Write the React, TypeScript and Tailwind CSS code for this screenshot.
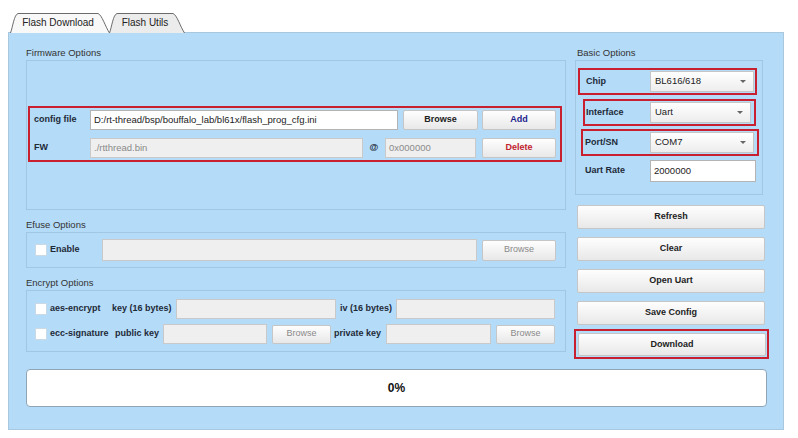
import type { ReactNode } from 'react'

const font = "font-['Liberation_Sans',Arial,sans-serif]"

function Tab({ label, active, width }: { label: string; active?: boolean; width: number }) {
  return (
    <div className="relative h-[21px] flex items-center justify-center" style={{ width }}>
      <svg className="absolute inset-0" width={width} height={21} viewBox={`0 0 ${width} 21`}>
        <path
          d={`M0.5 21 C3 14 4 3 8 1.5 L${width - 12} 1.5 C${width - 8} 3 ${width - 5} 14 ${width - 0.5} 21`}
          fill={active ? '#f8f8f8' : '#ececec'}
          stroke="#6b6b6b"
          strokeWidth="1"
        />
      </svg>
      <span className="relative text-[10px] text-[#222] pr-[4px]">{label}</span>
    </div>
  )
}

function Btn({ children, className = '', text = 'text-[#222]' }: { children: ReactNode; className?: string; text?: string }) {
  return (
    <div
      className={`flex items-center justify-center border border-[#c6c6c6] rounded-[2px] bg-gradient-to-b from-[#fefefe] to-[#e8e8e8] text-[9px] font-bold ${text} ${className}`}
    >
      {children}
    </div>
  )
}

function Field({ value = '', disabled, className = '' }: { value?: string; disabled?: boolean; className?: string }) {
  return (
    <div
      className={`flex items-center px-[3px] border text-[9.5px] ${
        disabled ? 'bg-[#efefef] border-[#c9c9c9] text-[#8a8a8a]' : 'bg-white border-[#b4b4b4] text-[#222]'
      } ${className}`}
    >
      {value}
    </div>
  )
}

function Check() {
  return <div className="w-[12px] h-[12px] bg-white border border-[#c9d9e6] shrink-0" />
}

function Select({ value, className = '' }: { value: string; className?: string }) {
  return (
    <div
      className={`flex items-center justify-between pl-[4px] pr-[7px] border border-[#c6c6c6] bg-gradient-to-b from-[#ffffff] to-[#ededed] text-[9.5px] text-[#222] ${className}`}
    >
      <span>{value}</span>
      <span className="w-0 h-0 border-l-[3px] border-r-[3px] border-t-[3px] border-l-transparent border-r-transparent border-t-[#666]" />
    </div>
  )
}

function Section({ title, h, className = '' }: { title: string; h: number; className?: string }) {
  return (
    <div className={`flex items-end pb-[1px] text-[9.5px] text-[#333] leading-[12px] ${className}`} style={{ height: h }}>
      {title}
    </div>
  )
}

export default function App() {
  return (
    <div className={`w-[798px] h-[438px] bg-white pt-[12px] pl-[8px] ${font}`}>
      {/* tab strip */}
      <div className="flex h-[21px] pl-[2px] relative z-10">
        <Tab label="Flash Download" active width={100} />
        <div className="-ml-[1px]">
          <Tab label="Flash Utils" width={76} />
        </div>
      </div>

      {/* main panel */}
      <div className="w-[776px] h-[398px] -mt-[1px] bg-[#b4dbf8] border border-[#a9c8de] pl-[17px] pr-[14px]">
        <div className="flex gap-[9px]">
          {/* left column */}
          <div className="w-[541px]">
            <Section title="Firmware Options" h={27} />
            <div className="h-[150px] border border-[#a2c7e3] pt-[45px] pl-[1px]">
              <div className="w-[534px] h-[56px] border-2 border-[#c8202f] pt-[2px] pl-[4px] flex flex-col gap-[8px]">
                <div className="flex items-center h-[20px]">
                  <div className="w-[56px] text-[9px] font-bold text-[#1e2a38]">config file</div>
                  <Field value="D:/rt-thread/bsp/bouffalo_lab/bl61x/flash_prog_cfg.ini" className="w-[308px] h-[20px]" />
                  <Btn className="w-[75px] h-[20px] ml-[5px]">Browse</Btn>
                  <Btn className="w-[74px] h-[20px] ml-[4px]" text="text-[#1c1f8e]">Add</Btn>
                </div>
                <div className="flex items-center h-[20px]">
                  <div className="w-[56px] text-[9px] font-bold text-[#1e2a38]">FW</div>
                  <Field value="./rtthread.bin" disabled className="w-[273px] h-[20px]" />
                  <div className="w-[22px] text-center text-[9px] font-bold text-[#1e2a38]">@</div>
                  <Field value="0x000000" disabled className="w-[91px] h-[20px]" />
                  <Btn className="w-[74px] h-[20px] ml-[6px]" text="text-[#c2222e]">Delete</Btn>
                </div>
              </div>
            </div>

            <Section title="Efuse Options" h={22} />
            <div className="h-[36px] border border-[#a2c7e3] flex items-center pl-[8px]">
              <Check />
              <div className="w-[55px] pl-[3px] text-[9px] font-bold text-[#1e2a38]">Enable</div>
              <Field disabled className="w-[375px] h-[22px]" />
              <Btn className="w-[74px] h-[21px] ml-[5px]" text="text-[#8a8a8a] !font-normal">Browse</Btn>
            </div>

            <Section title="Encrypt Options" h={22} />
            <div className="h-[62px] border border-[#a2c7e3] pl-[8px] pt-[8px] flex flex-col gap-[5px]">
              <div className="flex items-center h-[20px]">
                <Check />
                <div className="w-[65px] pl-[3px] text-[9px] font-bold text-[#1e2a38]">aes-encrypt</div>
                <div className="w-[64px] text-[9px] font-bold text-[#1e2a38]">key (16 bytes)</div>
                <Field disabled className="w-[160px] h-[20px]" />
                <div className="w-[60px] pl-[4px] text-[9px] font-bold text-[#1e2a38]">iv (16 bytes)</div>
                <Field disabled className="w-[159px] h-[20px]" />
              </div>
              <div className="flex items-center h-[20px]">
                <Check />
                <div className="w-[68px] pl-[3px] text-[9px] font-bold text-[#1e2a38]">ecc-signature</div>
                <div className="w-[48px] text-[9px] font-bold text-[#1e2a38]">public key</div>
                <Field disabled className="w-[104px] h-[20px]" />
                <Btn className="w-[59px] h-[19px] ml-[5px]" text="text-[#8a8a8a] !font-normal">Browse</Btn>
                <div className="w-[55px] pl-[3px] text-[9px] font-bold text-[#1e2a38]">private key</div>
                <Field disabled className="w-[105px] h-[20px]" />
                <Btn className="w-[59px] h-[19px] ml-[5px]" text="text-[#8a8a8a] !font-normal">Browse</Btn>
              </div>
            </div>
          </div>

          {/* right column */}
          <div className="w-[194px]">
            <Section title="Basic Options" h={27} className="pl-[2px]" />
            <div className="w-[188px] h-[135px] border border-[#a2c7e3] pt-[7px] flex flex-col">
              <div className="ml-[2px] w-[179px] h-[27px] border-2 border-[#c8202f] flex items-center">
                <div className="w-[70px] pl-[6px] text-[9px] font-bold text-[#1e2a38]">Chip</div>
                <Select value="BL616/618" className="w-[104px] h-[21px]" />
              </div>
              <div className="ml-[7px] mt-[4px] w-[173px] h-[27px] border-2 border-[#c8202f] flex items-center">
                <div className="w-[65px] pl-[1px] text-[9px] font-bold text-[#1e2a38]">Interface</div>
                <Select value="Uart" className="w-[101px] h-[21px]" />
              </div>
              <div className="ml-[5px] mt-[3px] w-[178px] h-[27px] border-2 border-[#c8202f] flex items-center">
                <div className="w-[67px] pl-[2px] text-[9px] font-bold text-[#1e2a38]">Port/SN</div>
                <Select value="COM7" className="w-[104px] h-[21px]" />
              </div>
              <div className="mt-[4px] flex items-center">
                <div className="w-[74px] pl-[9px] text-[9px] font-bold text-[#1e2a38]">Uart Rate</div>
                <Field value="2000000" className="w-[106px] h-[22px]" />
              </div>
            </div>
            <div className="flex flex-col gap-[8px] mt-[10px] ml-[2px]">
              <Btn className="w-[188px] h-[24px]">Refresh</Btn>
              <Btn className="w-[188px] h-[24px]">Clear</Btn>
              <Btn className="w-[188px] h-[24px]">Open Uart</Btn>
              <Btn className="w-[188px] h-[24px]">Save Config</Btn>
            </div>
            <div className="-ml-[1px] mt-[4px] w-[195px] h-[30px] border-2 border-[#c8202f] pl-[2px] pt-[2px]">
              <Btn className="w-[188px] h-[23px]">Download</Btn>
            </div>
          </div>
        </div>

        {/* progress */}
        <div className="mt-[10px] w-[741px] h-[38px] bg-white border border-[#8ea5b8] rounded-[4px] flex items-center justify-center text-[12px] font-bold text-[#111]">
          0%
        </div>
      </div>
    </div>
  )
}
